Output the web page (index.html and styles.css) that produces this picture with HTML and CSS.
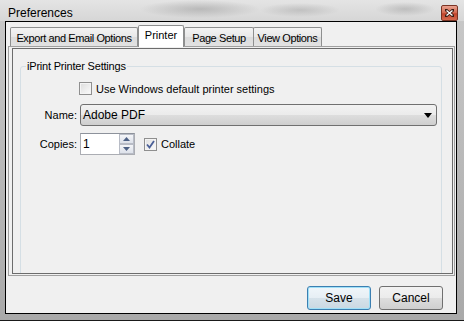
FILE: index.html
```html
<!DOCTYPE html>
<html lang="en">
  <head>
    <meta charset="UTF-8" />
    <title>Preferences</title>
    <link rel="stylesheet" href="styles.css">
  </head>
  <body>
    <div class="window">
      <div class="titlebar">
        <span class="title">Preferences</span>
        <span class="close">
          <svg width="9" height="8" viewBox="0 0 9 8">
            <path d="M1 1 L8 7 M8 1 L1 7" stroke="#3b1d14" stroke-width="3" stroke-linecap="square" />
            <path d="M1.5 1.5 L7.5 6.5 M7.5 1.5 L1.5 6.5" stroke="#ffffff" stroke-width="1.4" />
          </svg>
        </span>
      </div>

      <div class="client">
        <div class="tabs">
          <div class="tab tab-export">Export and Email Options</div>
          <div class="tab tab-printer active">Printer</div>
          <div class="tab tab-page">Page Setup</div>
          <div class="tab tab-view">View Options</div>
        </div>

        <div class="panel">
          <div class="inner">
            <fieldset class="group">
              <legend>iPrint Printer Settings</legend>

              <div class="row row-check">
                <span class="checkbox"></span>
                <span>Use Windows default printer settings</span>
              </div>

              <div class="row row-name">
                <span class="label">Name:</span>
                <div class="combo">
                  <span>Adobe PDF</span>
                  <svg width="8" height="5" viewBox="0 0 8 5"><path d="M0 0 H8 L4 5 Z" fill="#000" /></svg>
                </div>
              </div>

              <div class="row row-copies">
                <span class="label">Copies:</span>
                <div class="spin">
                  <span class="spin-value">1</span>
                  <div class="spin-btns">
                    <span class="spin-btn">
                      <svg width="7" height="4" viewBox="0 0 7 4"><path d="M0 4 H7 L3.5 0 Z" fill="#4d6185" /></svg>
                    </span>
                    <span class="spin-btn">
                      <svg width="7" height="4" viewBox="0 0 7 4"><path d="M0 0 H7 L3.5 4 Z" fill="#4d6185" /></svg>
                    </span>
                  </div>
                </div>
                <span class="checkbox checked">
                  <svg width="9" height="9" viewBox="0 0 9 9"><path d="M1 4.5 L3.5 7.5 L8 1" stroke="#4a5f97" stroke-width="1.8" fill="none" /></svg>
                </span>
                <span>Collate</span>
              </div>
            </fieldset>
          </div>
        </div>

        <div class="footer">
          <button class="btn btn-default">Save</button>
          <button class="btn">Cancel</button>
        </div>
      </div>
    </div>
  </body>
</html>
```

FILE: styles.css
```css
body {
  margin: 0;
  width: 464px;
  height: 321px;
  overflow: hidden;
  font-family: "Liberation Sans", Arial, sans-serif;
  font-size: 11px;
  color: #000;
}
.window {
  width: 464px;
  height: 321px;
  box-sizing: border-box;
  padding: 0 7px 6px 5px;
  display: flex;
  flex-direction: column;
  background: linear-gradient(to bottom, #c9c9c9, #a9a9a9);
  border-bottom: 1px solid #1a1a1a;
}
.titlebar {
  height: 21px;
  margin: 0 -7px 0 -5px;
  padding: 0 6px 0 8px;
  display: flex;
  align-items: center;
  background:
    radial-gradient(ellipse 60px 9px at 200px 9px, rgba(140,140,140,0.45), rgba(140,140,140,0)),
    radial-gradient(ellipse 40px 7px at 300px 10px, rgba(140,140,140,0.35), rgba(140,140,140,0)),
    radial-gradient(ellipse 30px 7px at 405px 9px, rgba(140,140,140,0.4), rgba(140,140,140,0)),
    linear-gradient(to bottom, #e4e4e4, #d6d6d6);
}
.title {
  font-size: 12px;
  padding-top: 5px;
}
.close {
  margin-left: auto;
  width: 15px;
  height: 14px;
  margin-top: 5px;
  border: 1px solid #7a3424;
  border-radius: 2px;
  background: linear-gradient(to bottom, #e9a290, #d2664c 50%, #c0432a 55%, #d46a4e);
  display: flex;
  align-items: center;
  justify-content: center;
}
.client {
  flex: 1;
  display: flex;
  flex-direction: column;
  background: #f0f0f0;
  border: 1px solid #000;
}
.tabs {
  display: flex;
  align-items: flex-end;
  height: 24px;
  padding-left: 4px;
}
.tab {
  box-sizing: border-box;
  height: 19px;
  border: 1px solid #8e8f8f;
  border-bottom: none;
  background: linear-gradient(to bottom, #f3f3f3, #e8e8e8 50%, #dcdcdc 51%, #e2e2e2);
  text-align: center;
  line-height: 20px;
  letter-spacing: -0.4px;
  border-radius: 2px 2px 0 0;
}
.tab-export { width: 128px; }
.tab-printer { width: 46px; }
.tab-page { width: 70px; }
.tab-view { width: 69px; margin-left: -1px; }
.tab.active {
  height: 22px;
  margin-bottom: -1px;
  background: #fff;
  line-height: 19px;
  position: relative;
  z-index: 1;
  letter-spacing: 0;
}
.panel {
  height: 230px;
  box-sizing: border-box;
  margin: 0 1px 0 2px;
  border: 1px solid #a0a0a0;
  padding: 1px 1px 1px 3px;
}
.inner {
  height: 100%;
  box-sizing: border-box;
  border: 1px solid #6c6c6c;
  padding: 11px 10px 0 7px;
  overflow: hidden;
}
.group {
  margin: 0;
  height: 230px;
  border: 1px solid #d5dfe5;
  border-radius: 3px;
  padding: 0;
}
.group legend {
  padding: 0 1px;
  margin-left: 5px;
  letter-spacing: -0.2px;
}
.row {
  display: flex;
  align-items: center;
}
.row-check {
  padding-left: 58px;
  margin-top: 10px;
  height: 13px;
}
.checkbox {
  box-sizing: border-box;
  width: 13px;
  height: 13px;
  border: 1px solid #8f8f8f;
  background: linear-gradient(135deg, #dcdcdc, #fbfbfb);
  box-shadow: inset 0 0 0 1px #f4f4f4;
  margin-right: 4px;
  display: flex;
  align-items: center;
  justify-content: center;
}
.label {
  width: 56px;
  text-align: right;
  padding-right: 3px;
}
.row-name {
  margin-top: 9px;
}
.combo {
  box-sizing: border-box;
  width: 357px;
  height: 22px;
  border: 1px solid #707070;
  border-radius: 3px;
  background: linear-gradient(to bottom, #f2f2f2, #ebebeb 50%, #dddddd 51%, #cfcfcf);
  display: flex;
  align-items: center;
  justify-content: space-between;
  padding: 0 4px 0 2px;
  font-size: 12px;
}
.row-copies {
  margin-top: 7px;
}
.spin {
  box-sizing: border-box;
  width: 55px;
  height: 22px;
  border: 1px solid #abadb3;
  border-top-color: #8d929b;
  background: #fff;
  display: flex;
  align-items: center;
  justify-content: space-between;
  padding: 0 0 0 2px;
  margin-right: 9px;
  font-size: 12px;
}
.spin-btns {
  display: flex;
  flex-direction: column;
  height: 20px;
  width: 15px;
}
.spin-btn {
  flex: 1;
  box-sizing: border-box;
  border: 1px solid #b8bcc6;
  background: linear-gradient(to bottom, #f4f5f8, #dde1ea);
  display: flex;
  align-items: center;
  justify-content: center;
}
.checked {
  background: linear-gradient(135deg, #e0e0e0, #fbfbfb);
}
.footer {
  flex: 1;
  display: flex;
  justify-content: flex-end;
  align-items: flex-start;
  padding: 10px 13px 0 0;
  gap: 8px;
}
.btn {
  width: 64px;
  height: 24px;
  font-family: "Liberation Sans", Arial, sans-serif;
  font-size: 12px;
  color: #000;
  border: 1px solid #707070;
  border-radius: 3px;
  background: linear-gradient(to bottom, #f2f2f2, #ebebeb 50%, #dddddd 51%, #cfcfcf);
  padding: 0;
}
.btn-default {
  border-color: #3c7fb1;
  box-shadow: inset 0 0 0 1px #9fe0f8;
  background: linear-gradient(to bottom, #f0f6fa, #e6eef4 50%, #d6e2ea 51%, #cad8e2);
}
```
